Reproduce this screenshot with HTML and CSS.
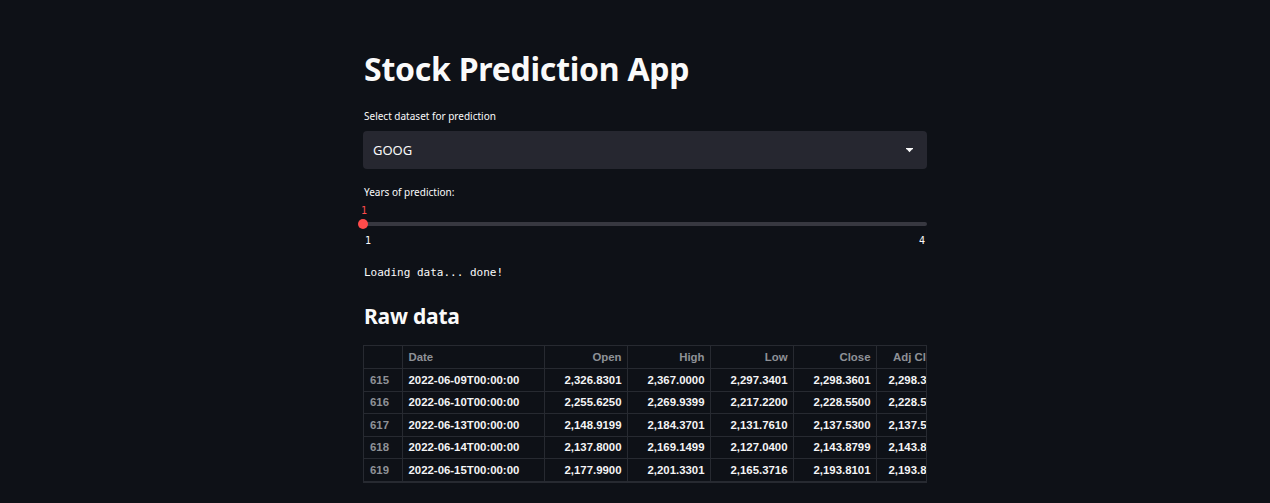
FILE: index.html
```html
<!DOCTYPE html>
<html>
<head>
<meta charset="utf-8">
<link rel="stylesheet" href="styles.css">
</head>
<body>
<main class="main">
  <h1 class="title">Stock Prediction App</h1>

  <div class="widget">
    <label class="label">Select dataset for prediction</label>
    <div class="select">
      <span class="select-value">GOOG</span>
      <svg class="caret" width="7" height="5" viewBox="0 0 7 5"><path d="M0 0H7V1.3H6.2L3.5 4.2L0.8 1.3H0Z" fill="#fafafa"/></svg>
    </div>
  </div>

  <div class="widget slider-widget">
    <label class="label">Years of prediction:</label>
    <div class="slider">
      <div class="thumb-value">1</div>
      <div class="track"><span class="thumb"></span></div>
      <div class="ticks"><span>1</span><span>4</span></div>
    </div>
  </div>

  <pre class="code">Loading data... done!</pre>

  <h2 class="subtitle">Raw data</h2>

  <div class="grid-wrap">
    <table class="grid">
      <colgroup>
        <col class="c-idx"><col class="c-date"><col class="c-num"><col class="c-num"><col class="c-num"><col class="c-num"><col class="c-adj">
      </colgroup>
      <thead>
        <tr><th></th><th class="left">Date</th><th>Open</th><th>High</th><th>Low</th><th>Close</th><th>Adj Close</th></tr>
      </thead>
      <tbody>
        <tr><td class="idx">615</td><td class="left">2022-06-09T00:00:00</td><td>2,326.8301</td><td>2,367.0000</td><td>2,297.3401</td><td>2,298.3601</td><td>2,298.3601</td></tr>
        <tr><td class="idx">616</td><td class="left">2022-06-10T00:00:00</td><td>2,255.6250</td><td>2,269.9399</td><td>2,217.2200</td><td>2,228.5500</td><td>2,228.5500</td></tr>
        <tr><td class="idx">617</td><td class="left">2022-06-13T00:00:00</td><td>2,148.9199</td><td>2,184.3701</td><td>2,131.7610</td><td>2,137.5300</td><td>2,137.5300</td></tr>
        <tr><td class="idx">618</td><td class="left">2022-06-14T00:00:00</td><td>2,137.8000</td><td>2,169.1499</td><td>2,127.0400</td><td>2,143.8799</td><td>2,143.8799</td></tr>
        <tr><td class="idx">619</td><td class="left">2022-06-15T00:00:00</td><td>2,177.9900</td><td>2,201.3301</td><td>2,165.3716</td><td>2,193.8101</td><td>2,193.8101</td></tr>
      </tbody>
    </table>
  </div>
</main>
</body>
</html>
```

FILE: styles.css
```css
html, body {
  margin: 0;
  padding: 0;
  background: #0e1117;
  color: #fafafa;
  font-family: "Noto Sans", "Open Sans", sans-serif;
}

.main {
  width: 564px;
  margin-left: 363px;
  padding-top: 46px;
}

.title {
  margin: 0;
  font-size: 32px;
  font-weight: 700;
  line-height: 46px;
  letter-spacing: -0.25px;
  padding-left: 1px;
}

.widget {
  margin-top: 17px;
}

.label {
  display: block;
  font-size: 10px;
  line-height: 14px;
  padding-left: 1px;
  color: #fafafa;
}

.select {
  margin-top: 8px;
  height: 38px;
  background: #262730;
  border-radius: 4px;
  display: flex;
  align-items: center;
  justify-content: space-between;
  padding: 0 14px 0 10px;
}

.select-value {
  font-size: 13px;
}

.caret {
  display: block;
}

.slider-widget {
  margin-top: 16px;
}

.slider {
  position: relative;
  margin-top: 6px;
}

.thumb-value {
  font-family: "DejaVu Sans Mono", monospace;
  font-size: 10px;
  line-height: 12px;
  color: #ff4b4b;
  margin-left: -2px;
}

.track {
  position: relative;
  margin-top: 5px;
  height: 4px;
  background: #373840;
  border-radius: 2px;
}

.thumb {
  position: absolute;
  left: -5px;
  top: -3px;
  width: 10px;
  height: 10px;
  border-radius: 50%;
  background: #ff4b4b;
}

.ticks {
  display: flex;
  justify-content: space-between;
  font-family: "DejaVu Sans Mono", monospace;
  font-size: 10px;
  line-height: 12px;
  margin-top: 9px;
  padding: 0 2px 0 2px;
}

.code {
  margin: 19px 0 0 1px;
  font-family: "DejaVu Sans Mono", monospace;
  font-size: 11px;
  line-height: 14px;
  color: #fafafa;
}

.subtitle {
  margin: 21px 0 0 1px;
  font-size: 21px;
  font-weight: 700;
  line-height: 30px;
  letter-spacing: -0.2px;
}

.grid-wrap {
  margin-top: 14px;
  width: 564px;
  overflow: hidden;
  border: 1px solid #272a31;
  box-sizing: border-box;
}

.grid {
  border-collapse: collapse;
  table-layout: fixed;
  width: 587px;
  font-family: "Liberation Sans", Arial, sans-serif;
  font-size: 11.4px;
}

.c-idx { width: 38px; }
.c-date { width: 142px; }
.c-num { width: 83px; }
.c-adj { width: 75px; }

.grid th, .grid td {
  height: 22.5px;
  padding: 0 5px 0 6px;
  border: 1px solid #272a31;
  text-align: right;
  white-space: nowrap;
  overflow: hidden;
  box-sizing: border-box;
}

.grid tr:first-child th { border-top: none; }
.grid th:first-child, .grid td:first-child { border-left: none; }

.grid th {
  font-weight: 700;
  color: #8e9197;
}

.grid td {
  font-weight: 700;
  color: #f4f4f5;
}

.grid .left {
  text-align: left;
}

.grid td.idx {
  text-align: left;
  color: #8e9197;
}
```
